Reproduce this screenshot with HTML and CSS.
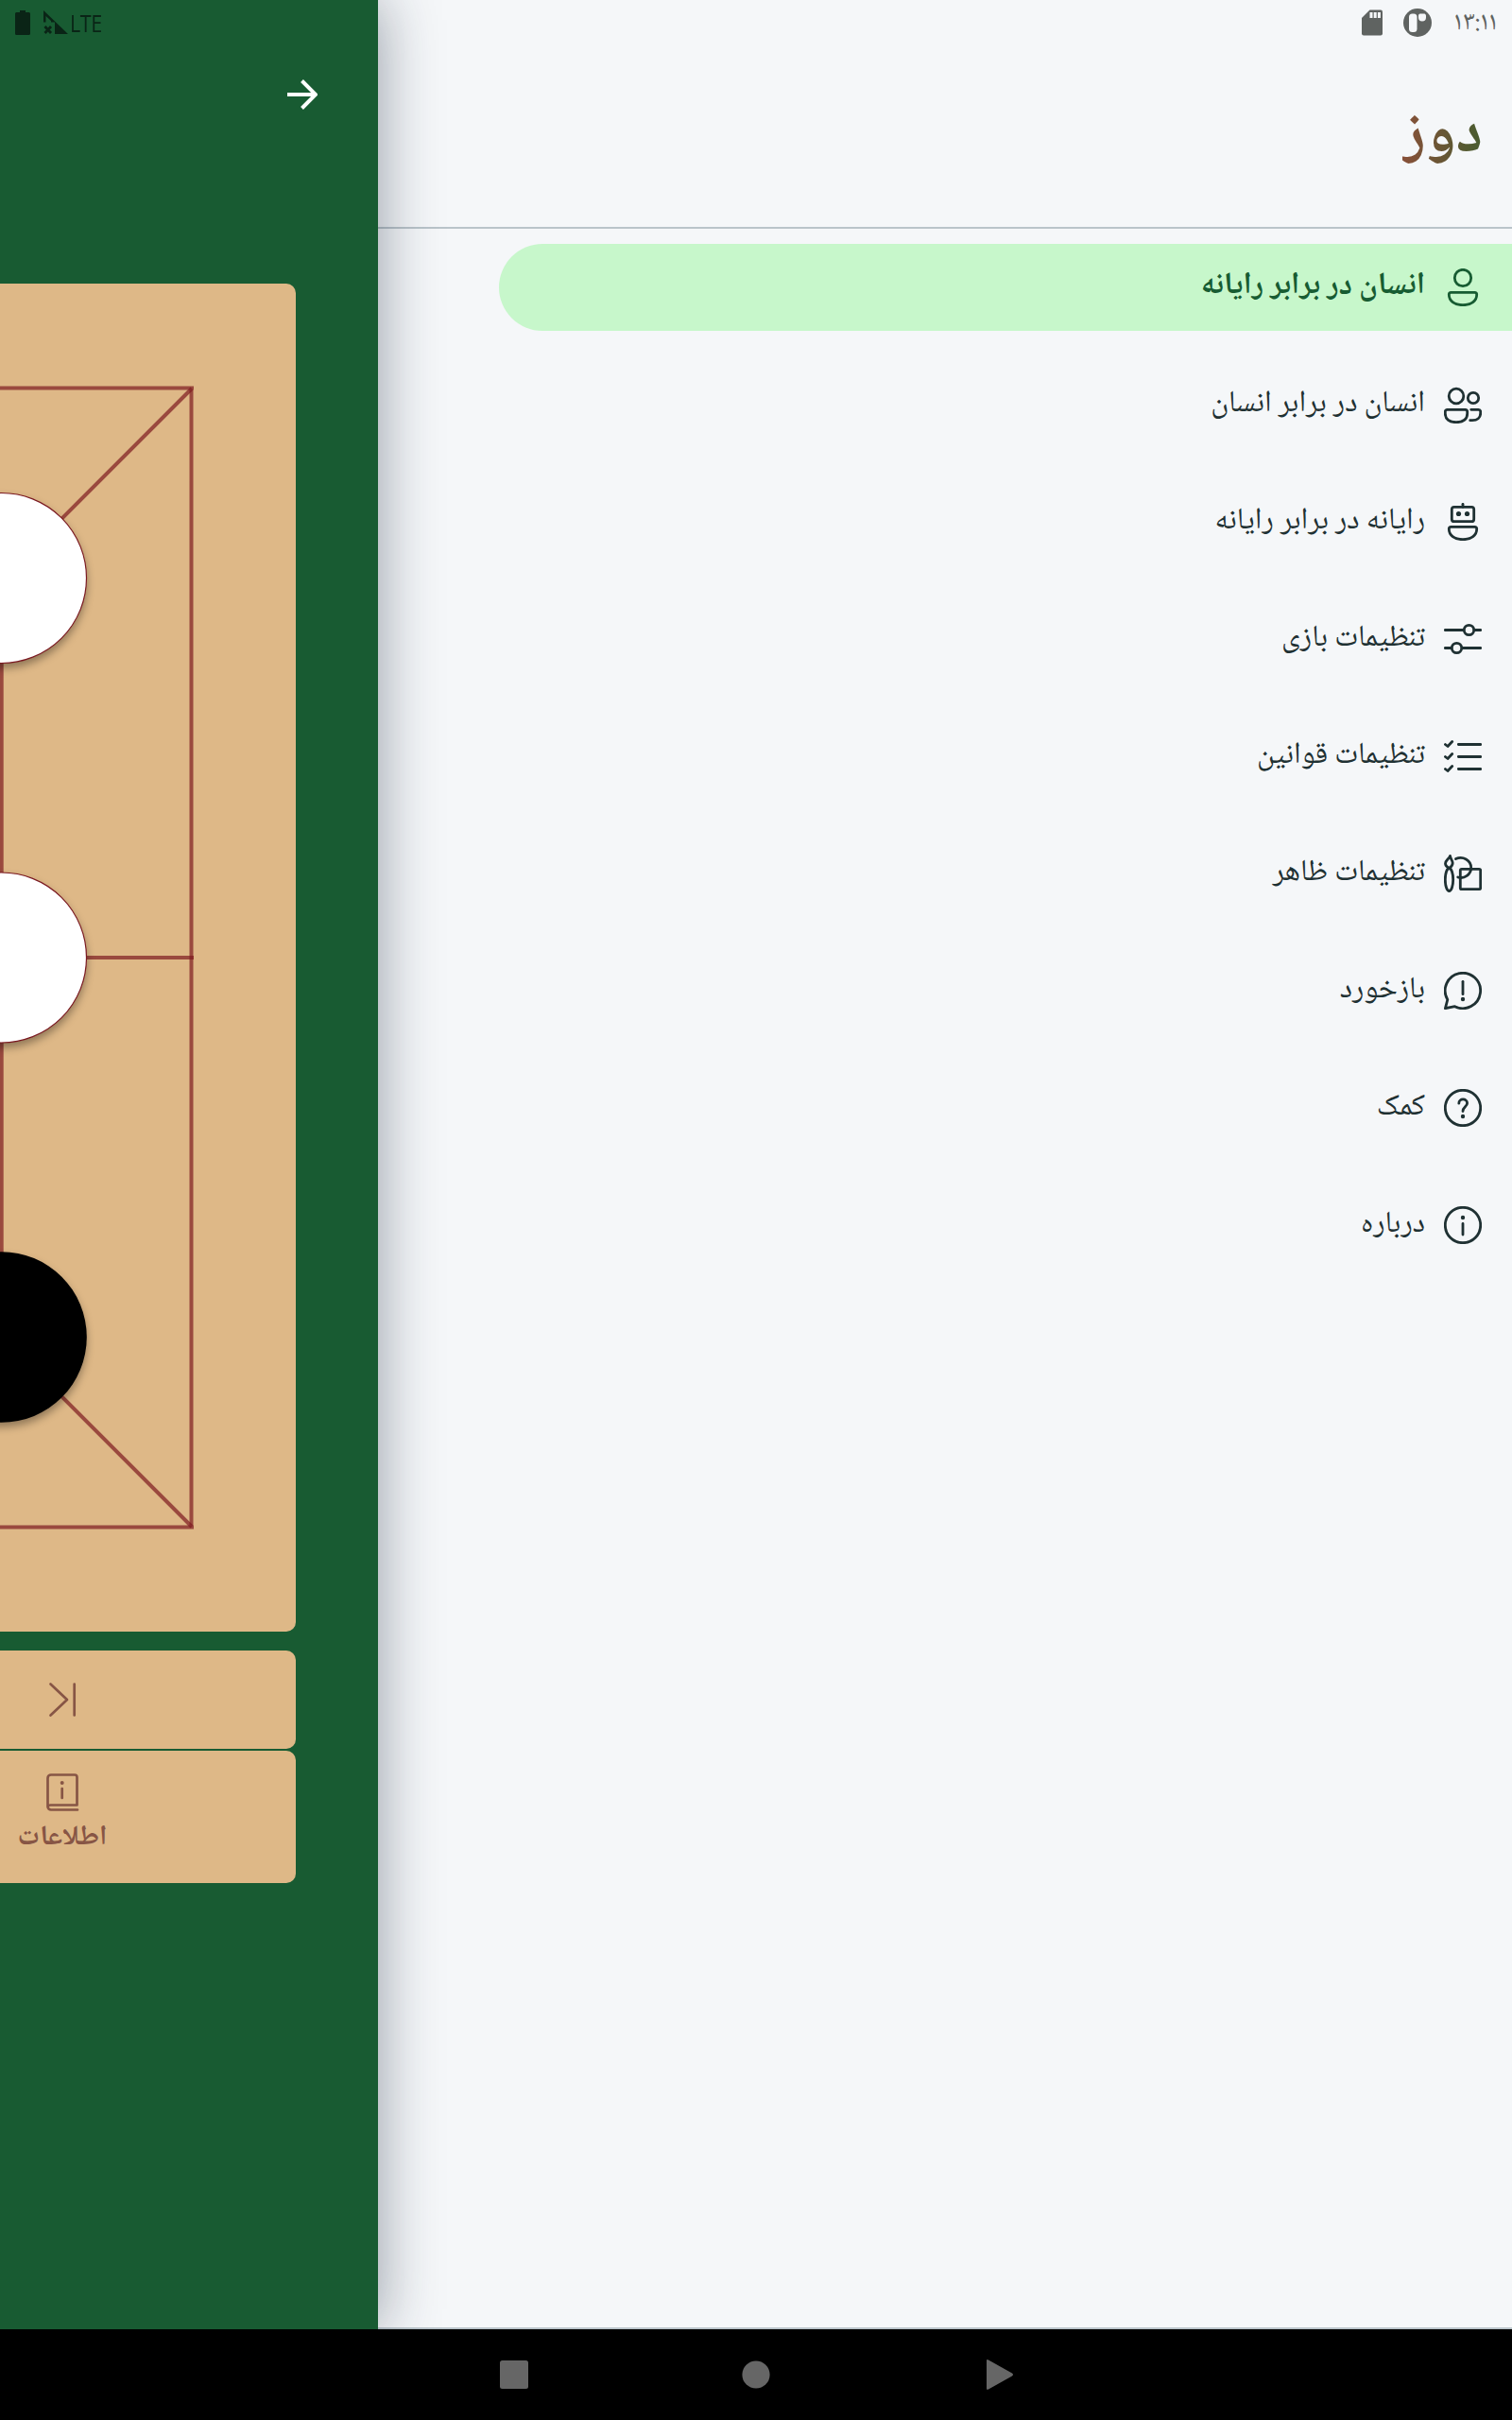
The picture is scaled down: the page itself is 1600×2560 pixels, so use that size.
FILE: index.html
```html
<!DOCTYPE html>
<html lang="fa" dir="rtl">
<head>
<meta charset="utf-8">
<title>دوز</title>
<link rel="stylesheet" href="styles.css">
</head>
<body>
<main class="screen">
  <aside class="drawer">
    <div class="status">
      <span class="clock">۱۳:۱۱</span>
      <svg class="logo-p" viewBox="0 0 32 32"><circle cx="16" cy="16" r="15" fill="#5f6361"/><rect x="7" y="6.500" width="8.500" height="19.500" rx="3.500" fill="#f5f7f9"/><path d="M18.500 6.500h5a2.500 2.500 0 0 1 1.500 2v2a4 4 0 0 1-8 0v-2a2 2 0 0 1 1.500-2z" fill="#f5f7f9"/></svg>
      <svg class="sd" viewBox="0 0 22 28"><path d="M8.500.5H20A2 2 0 0 1 22 2.500V25.500a2 2 0 0 1-2 2H2a2 2 0 0 1-2-2V9z" fill="#5f6361"/><path d="M8.500 3h3v6h-3zM12.700 3h3v6h-3zM16.900 3h3v6h-3z" fill="#f5f7f9"/></svg>
    </div>
    <h1 class="title"><span>دوز</span></h1>
    <nav class="menu">
      <a class="item active"><svg viewBox="0 0 40 40"><circle cx="20" cy="10" r="8.700"/><path d="M7.500 25.300h25a2.200 2.200 0 0 1 2.200 2.200c0 6.800-5.700 11.200-14.700 11.200S5.300 34.300 5.300 27.500a2.200 2.200 0 0 1 2.200-2.200z"/></svg><span>انسان در برابر رایانه</span></a>
      <a class="item"><svg viewBox="0 0 40 40"><circle cx="13" cy="11" r="7.800"/><circle cx="31" cy="13" r="5.700"/><path d="M3.500 25.300h19a2.200 2.200 0 0 1 2.200 2.200v2c0 6-4.500 9.200-11.700 9.200S1.300 35.500 1.300 29.500v-2a2.200 2.200 0 0 1 2.200-2.200zM28.700 25.300h7.800a2.200 2.200 0 0 1 2.200 2.200v1.500c0 5-3.500 7.700-8.700 7.700h-2.300"/></svg><span>انسان در برابر انسان</span></a>
      <a class="item"><svg viewBox="0 0 40 40"><path d="M20 1.300v3"/><rect x="8.300" y="4.300" width="23.400" height="15.400" rx="2.500"/><circle class="dot" cx="15.500" cy="11.500" r="2.600"/><circle class="dot" cx="24.500" cy="11.500" r="2.600"/><path d="M7.500 25.300h25a2.200 2.200 0 0 1 2.200 2.200c0 6.800-5.700 11.200-14.700 11.200S5.300 34.300 5.300 27.500a2.200 2.200 0 0 1 2.200-2.200z"/></svg><span>رایانه در برابر رایانه</span></a>
      <a class="item"><svg viewBox="0 0 40 40"><path d="M1.300 10.500h19.500M32 10.500h6.700M1.300 29.500H8M19.500 29.500h19.200"/><circle cx="26.500" cy="10.500" r="5.200"/><circle cx="13.500" cy="29.500" r="5.200"/></svg><span>تنظیمات بازی</span></a>
      <a class="item"><svg viewBox="0 0 40 40"><path d="M15.300 7.500h23.400M15.300 20.500h23.400M15.300 33.500h23.400M1.400 7.500l2.600 2 4.700-5M1.400 20.500l2.600 2 4.700-5M1.400 33.500l2.600 2 4.700-5"/></svg><span>تنظیمات قوانین</span></a>
      <a class="item"><svg viewBox="0 0 40 40"><path d="M6.500 1.500C5 5 1.500 6 1.500 9.500S5 13.500 5.500 14.500c1.500-1 3.700-2.500 3.700-5.500S7 5 6.500 1.500z"/><ellipse cx="5.500" cy="26.500" rx="4.200" ry="12"/><path d="M12.500 4.600C20 1 28.700 6 28.700 14c0 7-7 12-14 10"/><rect x="17.300" y="15.300" width="21.400" height="21.400" rx="1.500"/></svg><span>تنظیمات ظاهر</span></a>
      <a class="item"><svg viewBox="0 0 40 40"><path d="M3.800 29.500A18.700 18.700 0 1 1 11.500 36.700L1.400 38.700z"/><path d="M20 10.300v13.400"/><circle class="dot" cx="20" cy="29" r="2.200"/></svg><span>بازخورد</span></a>
      <a class="item"><svg viewBox="0 0 40 40"><circle cx="20" cy="20" r="18.700"/><path d="M15.800 15.200c0-5.600 8.800-5.600 8.800-.2 0 3.700-4.600 4-4.600 8.500"/><circle class="dot" cx="20" cy="29" r="2.200"/></svg><span>کمک</span></a>
      <a class="item"><svg viewBox="0 0 40 40"><circle cx="20" cy="20" r="18.700"/><path d="M20 18.500V30"/><circle class="dot" cx="20" cy="12" r="2.200"/></svg><span>درباره</span></a>
    </nav>
  </aside>
  <section class="game" dir="ltr">
    <div class="status">
      <svg class="battery" viewBox="0 0 16 26"><path d="M5 0h6v2h3.500A1.500 1.500 0 0 1 16 3.500v21a1.500 1.500 0 0 1-1.500 1.500h-13A1.500 1.500 0 0 1 0 24.500v-21A1.500 1.500 0 0 1 1.500 2H5z"/></svg>
      <svg class="signal" viewBox="0 0 26 26"><path fill-rule="evenodd" d="M0 0l26 25H12V12.500H0zM2.500 6v6.500H8V11z"/><path d="M1.500 17l6.500 7M8 17l-6.500 7" stroke="#0a2416" stroke-width="2.800"/></svg>
      <span class="lte">LTE</span>
    </div>
    <div class="toolbar"><svg viewBox="0 0 32 32"><path d="M0 16h29M15.500 1.500L30 16 15.500 30.500"/></svg></div>
    <svg class="board" viewBox="0 0 313 1426">
      <g class="lines"><path d="M-10 110.500H205M-10 1315.500H205"/><path d="M202.500 112.500V1313.500M1.700 400V1030"/><path d="M0 713H205M203 111L0 314M203 1315L0 1112"/></g>
      <g class="piece"><circle class="white" cx="1.500" cy="311.500" r="90"/><circle class="white" cx="1.500" cy="713" r="90"/><circle cx="1.500" cy="1114.500" r="90.300"/></g>
    </svg>
    <div class="panel last"><svg viewBox="0 0 40 40"><path d="M7.500 3.500L25 20 7.500 36.500M32.700 3.500v33"/></svg></div>
    <div class="panel info"><svg viewBox="0 0 40 40"><path d="M36 38.500H8a3.500 3.500 0 0 1-3.500-3.500V5A3.500 3.500 0 0 1 8 1.500h25A2.500 2.500 0 0 1 35.500 4v29.500H7.500c-1.700 0-3 .6-3 2M19.700 16v10"/><circle class="dot" cx="19.700" cy="10" r="2"/></svg><span>اطلاعات</span></div>
  </section>
</main>
<footer class="navbar" dir="ltr">
  <svg viewBox="0 0 32 32"><rect x="1" y="1" width="30" height="30" rx="2.500"/></svg>
  <svg viewBox="0 0 32 32"><circle cx="16" cy="16" r="14.600"/></svg>
  <svg viewBox="0 0 32 32"><path d="M4 1.500Q4-.8 6 .5L31 14.500q2 1.500 0 3L6 31.500Q4 32.800 4 30.500z"/></svg>
</footer>
</body>
</html>
```
FILE: styles.css
```css
* { box-sizing: border-box; }
body { margin: 0; width: 1600px; height: 2560px; background: #000; font-family: "Noto Naskh Arabic UI", "Noto Naskh Arabic", "Noto Sans Arabic", "Noto Sans", "DejaVu Sans", sans-serif; overflow: hidden; }
svg { display: block; flex: none; }
.screen { display: flex; height: 2464px; overflow: hidden; }
.drawer { width: 1200px; background: #f5f7f9; border-bottom: 2px solid #bac4ca; }
.status { display: flex; align-items: center; height: 48px; }
.drawer .status { padding-right: 16px; }
.clock { width: 46px; font-size: 28px; line-height: 48px; color: #5f6361; white-space: nowrap; }
.logo-p { width: 32px; height: 32px; margin-right: 22px; }
.sd { width: 22px; height: 28px; margin-right: 21px; }
.title { display: flex; align-items: center; height: 194px; margin: 0; padding-right: 31px; border-bottom: 2px solid #bac4ca; font-size: 65px; font-weight: 700; line-height: 130px; }
.title span { background: linear-gradient(90deg, #885039, #475c2f); background-clip: text; color: transparent; }
.menu { display: flex; flex-direction: column; gap: 32px; padding: 16px 0 0 128px; }
.item { display: flex; align-items: center; gap: 20px; height: 92px; padding-right: 32px; border-radius: 46px 0 0 46px; color: #1f3133; font-size: 32px; line-height: 40px; }
.item span { padding-bottom: 2px; white-space: nowrap; }
.item svg { width: 40px; height: 40px; fill: none; stroke: currentColor; stroke-width: 2.800; stroke-linecap: round; stroke-linejoin: round; }
.item .dot, .panel .dot { fill: currentColor; stroke: none; }
.active { background: #c7f7cb; color: #175c32; font-size: 32.6px; font-weight: 700; }
.game { position: relative; width: 400px; background: #185b32; box-shadow: 0 0 60px rgb(20 35 55 / .44); }
.game .status { padding-left: 16px; fill: #0a2416; color: #0a2416; }
.battery { width: 16px; height: 26px; }
.signal { width: 26px; height: 26px; margin-left: 14px; }
.lte { margin-left: 2px; font: 25px/48px "Open Sans", sans-serif; letter-spacing: -.5px; transform: scaleX(.86); transform-origin: left; }
.toolbar { display: flex; justify-content: flex-end; height: 252px; padding: 36px 64px 0 0; }
.toolbar svg { width: 32px; height: 32px; fill: none; stroke: #fff; stroke-width: 4; }
.board { width: 313px; height: 1426px; background: #deb887; border-radius: 0 10px 10px 0; }
.lines { fill: none; stroke: #7d1a20; stroke-opacity: .7; stroke-width: 4; }
.piece { filter: drop-shadow(0 5px 4px rgb(0 0 0 / .35)); }
.white { fill: #fff; stroke: #7a1820; stroke-width: 1.200; }
.panel { width: 313px; background: #deb887; border-radius: 0 10px 10px 0; color: #875545; }
.panel svg { width: 40px; height: 40px; fill: none; stroke: currentColor; stroke-width: 2.700; stroke-linecap: round; stroke-linejoin: round; }
.last { height: 104px; margin-top: 20px; padding: 32px 0 0 46px; }
.info { display: flex; flex-direction: column; align-items: center; height: 140px; margin-top: 2px; padding: 24px 181px 0 0; font-size: 29.5px; font-weight: 700; line-height: 56px; }
.navbar { display: flex; justify-content: center; gap: 224px; height: 96px; padding-top: 32px; fill: #666; }
.navbar svg { width: 32px; height: 32px; }
```
